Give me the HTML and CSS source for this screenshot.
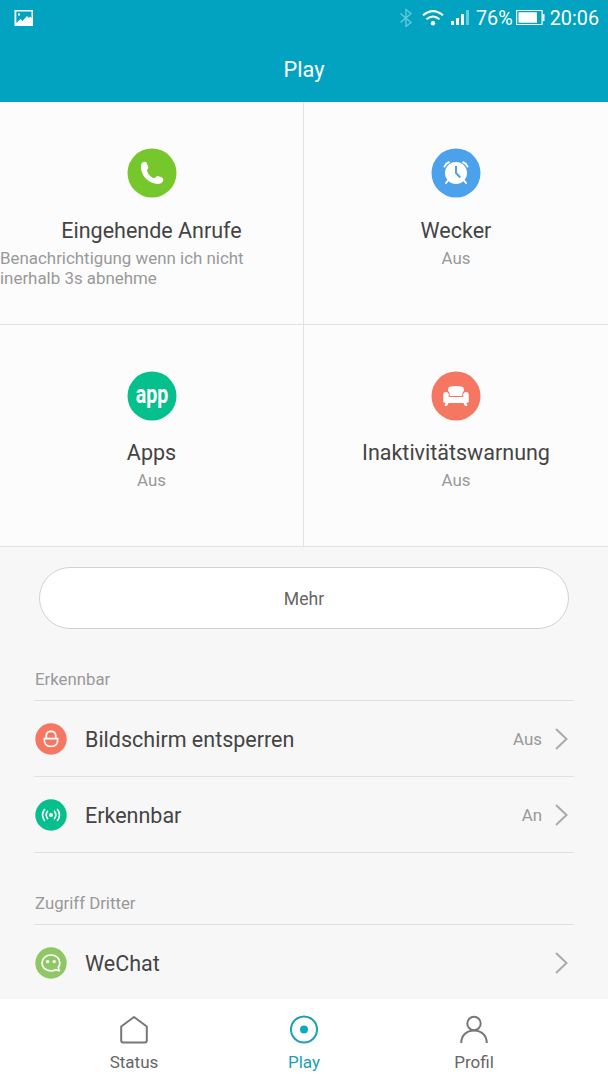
FILE: index.html
```html
<!DOCTYPE html>
<html lang="de">
<head>
<meta charset="utf-8">
<title>Play</title>
<link rel="stylesheet" href="styles.css">
</head>
<body>
<div class="screen">
  <header class="header">
    <div class="statusbar">
      <svg class="picture" width="20" height="18" viewBox="0 0 20 18"><path fill="#fff" fill-rule="evenodd" d="M.5 1h18.500v16H.5zM2.300 2.500v11.500L6.500 10l2 2 4.500-5 2 2 1-1.500 1.500 1.500v-6.500zM4 4.500h2v2H4z"/></svg>
      <div class="indicators">
        <svg class="bluetooth" width="14" height="20" viewBox="0 0 14 20" fill="none" stroke="#66cbda" stroke-width="1.300"><path d="M1.500 5.500L12 14.500L7 18.500V1.500L12 5.500L1.500 14.500"/></svg>
        <svg class="wifi" width="22" height="18" viewBox="0 0 22 18" fill="none" stroke="#fff" stroke-width="2.100"><path d="M1 6.300Q11-2.200 21 6.300M4.500 10.300Q11 4.700 17.500 10.300"/><circle cx="11" cy="14.300" r="2.200" fill="#fff" stroke="none"/></svg>
        <svg class="signal" width="20" height="18" viewBox="0 0 20 18"><path fill="#fff" d="M0 12h3v4H0zM5 9h3v7H5zM10 5h3v11h-3z"/><path fill="#66cbda" d="M15 1h3v15h-3z"/></svg>
        <span class="percent">76%</span>
        <svg class="battery" width="30" height="18" viewBox="0 0 30 18"><path d="M.6 1.500h25.500v14H.6z" fill="none" stroke="#fff" stroke-width="1.200"/><path d="M2.500 3.300h18.500v10.400H2.500zM26.500 5h2v7h-2z" fill="#fff"/></svg>
        <span class="time">20:06</span>
      </div>
    </div>
    <h1 class="title">Play</h1>
  </header>

  <main class="content">
    <section class="tiles">
      <div class="tile">
        <svg class="tile-icon" viewBox="0 0 50 50"><circle cx="25" cy="25" r="24.500" fill="#75c72c"/><path fill="#fff" d="M14.200 16.500C15 13.500 18.500 12.800 19.700 15L21.300 19C21.500 21 19.500 21.500 20.200 23.500C21.500 26.700 23.500 28.800 26.500 30C28.500 30.500 29 28 31 28L35 29.500C37.700 31 36 34.500 33.500 35.500C29 37 23 34.500 19.300 31C15.700 27.500 13 21.500 14.200 16.500Z"/></svg>
        <h2 class="tile-name">Eingehende Anrufe</h2>
        <p class="tile-state">Benachrichtigung wenn ich nicht inerhalb 3s abnehme</p>
      </div>
      <div class="tile">
        <svg class="tile-icon" viewBox="0 0 50 50"><circle cx="25" cy="25" r="24.500" fill="#4ca2ea"/><circle cx="25" cy="25" r="11" fill="#fff"/><g fill="none" stroke="#fff" stroke-width="2" stroke-linecap="round"><path d="M13.500 18.500Q14.500 15.500 17.800 14.300M36.500 18.500Q35.500 15.500 32.200 14.300M17 32.500L15 35M33 32.500L35 35"/></g><path d="M25 18v7l4.300 4.500" fill="none" stroke="#4ca2ea" stroke-width="2"/></svg>
        <h2 class="tile-name">Wecker</h2>
        <p class="tile-state">Aus</p>
      </div>
      <div class="tile lower">
        <svg class="tile-icon" viewBox="0 0 50 50"><circle cx="25" cy="25" r="24.500" fill="#05c08c"/><text class="app-mark" x="8.700" y="32" textLength="32.500" lengthAdjust="spacingAndGlyphs">app</text></svg>
        <h2 class="tile-name">Apps</h2>
        <p class="tile-state">Aus</p>
      </div>
      <div class="tile lower">
        <svg class="tile-icon" viewBox="0 0 50 50"><circle cx="25" cy="25" r="24.500" fill="#f57762"/><path fill="#fff" d="M17 20V18.500Q17 15.500 20 15.500Q25 14.700 30 15.500Q33 15.500 33 18.500V20Q31.300 20.700 31.300 23V25H18.700V23Q18.700 20.700 17 20Z"/><path fill="#fff" d="M12.300 23.500Q12.300 21 15 21Q17.700 21 17.700 23.500V25.900H32.300V23.500Q32.300 21 35 21Q37.700 21 37.700 23.500V31.500H35.500L36.500 35H34.200L32.300 32H17.700L15.800 35H13.500L14.500 31.500H12.300Z"/></svg>
        <h2 class="tile-name">Inaktivitätswarnung</h2>
        <p class="tile-state">Aus</p>
      </div>
    </section>

    <button class="more">Mehr</button>

    <section class="group">
      <h3 class="group-name">Erkennbar</h3>
      <div class="row">
        <svg class="row-icon" viewBox="0 0 32 32"><circle cx="16" cy="16" r="15.700" fill="#f57762"/><g fill="none" stroke="#fff" stroke-width="1.700"><path d="M9.300 15.700H22.700Q23.200 23.500 16 23.500Q8.800 23.500 9.300 15.700Z"/><path d="M11.300 15.500V12.500Q11.500 8.300 16 8.300Q20.500 8.300 20.700 12.500V15.500"/></g></svg>
        <span class="row-name">Bildschirm entsperren</span>
        <span class="row-state">Aus</span>
        <svg class="chevron" viewBox="0 0 13 22"><path d="M1 1l10.500 10L1 21"/></svg>
      </div>
      <div class="row">
        <svg class="row-icon" viewBox="0 0 32 32"><circle cx="16" cy="16" r="15.700" fill="#05c08c"/><circle cx="16" cy="16" r="2" fill="#fff"/><path fill="none" stroke="#fff" stroke-width="1.600" d="M12.900 11.800Q9.500 16 12.900 20.200M9.800 10Q5.200 16 9.800 22M19.100 11.800Q22.500 16 19.100 20.200M22.200 10Q26.800 16 22.200 22"/></svg>
        <span class="row-name">Erkennbar</span>
        <span class="row-state">An</span>
        <svg class="chevron" viewBox="0 0 13 22"><path d="M1 1l10.500 10L1 21"/></svg>
      </div>
    </section>

    <section class="group">
      <h3 class="group-name">Zugriff Dritter</h3>
      <div class="row">
        <svg class="row-icon" viewBox="0 0 32 32"><circle cx="16" cy="16" r="15.700" fill="#90c766"/><path fill="none" stroke="#fff" stroke-width="1.700" stroke-linejoin="round" d="M23.300 20.500Q24.800 18.300 24.800 16C24.800 11.300 21 8 16 8S7 11.300 7 16S11 23.800 16 23.800Q18.800 23.800 20.800 22.700L24.200 23.800Z"/><circle cx="12.600" cy="14.600" r="1.700" fill="#fff"/><circle cx="19.200" cy="14.600" r="1.700" fill="#fff"/></svg>
        <span class="row-name">WeChat</span>
        <svg class="chevron" viewBox="0 0 13 22"><path d="M1 1l10.500 10L1 21"/></svg>
      </div>
    </section>
  </main>

  <nav class="tabs">
    <div class="tab">
      <svg class="tab-icon" viewBox="0 0 30 30"><path d="M15 2L27.800 11.500V25.500Q27.800 27.500 25.800 27.500H4.200Q2.200 27.500 2.200 25.500V11.500Z"/></svg>
      <span>Status</span>
    </div>
    <div class="tab active">
      <svg class="tab-icon" viewBox="0 0 30 30"><circle cx="15" cy="14.500" r="13"/><circle class="dot" cx="15" cy="14.500" r="4"/></svg>
      <span>Play</span>
    </div>
    <div class="tab">
      <svg class="tab-icon" viewBox="0 0 30 30"><circle cx="15" cy="8.500" r="6.700"/><path d="M2.200 28C2.200 20 8 15.500 15 15.500S27.800 20 27.800 28"/></svg>
      <span>Profil</span>
    </div>
  </nav>
</div>
</body>
</html>
```

FILE: styles.css
```css
* {
  box-sizing: border-box;
  margin: 0;
}

body {
  font-family: Roboto, "Liberation Sans", sans-serif;
  color: #444;
}

svg {
  display: block;
  flex: none;
}

.screen {
  width: 608px;
  height: 1080px;
  display: flex;
  flex-direction: column;
  overflow: hidden;
  background: #f7f7f7;
}

.header {
  height: 102px;
  flex: none;
  background: #02a3c0;
  color: #fff;
}

.statusbar {
  height: 36px;
  padding: 0 9px 0 14px;
  display: flex;
  align-items: center;
  justify-content: space-between;
}

.indicators {
  display: flex;
  align-items: center;
  font-size: 19.800px;
  line-height: 34px;
}

.percent,
.time {
  padding-top: 2px;
}

.wifi { margin-left: 9px; }
.signal { margin-left: 7px; }
.percent { margin-left: 5px; }
.battery { margin-left: 3px; }
.time { margin-left: 4px; }

.title {
  font-size: 21.700px;
  font-weight: 400;
  line-height: 67px;
  text-align: center;
}

.content {
  height: 897px;
  flex: none;
  overflow: hidden;
}

.tiles {
  display: grid;
  grid-template-columns: 304px 304px;
  grid-template-rows: 223px 222px;
  background: #fcfcfc;
}

.tile {
  padding-top: 46px;
  display: flex;
  flex-direction: column;
  align-items: center;
  border-bottom: 1px solid #e2e2e2;
}

.tile:nth-child(odd) {
  border-right: 1px solid #e2e2e2;
}

.tile-icon {
  width: 50px;
  height: 50px;
  overflow: visible;
}

.tile-name {
  margin-top: 19px;
  font-size: 21.500px;
  font-weight: 400;
  line-height: 27px;
}

.lower .tile-name {
  margin-top: 18px;
}

.tile-state {
  margin-top: 3.500px;
  font-size: 16.900px;
  line-height: 20px;
  color: #999;
}

.app-mark {
  font-size: 26px;
  font-weight: 700;
  fill: #fff;
}

.more {
  display: block;
  width: 530px;
  height: 62px;
  margin: 20px auto 0;
  padding: 2px 0 0;
  border: 1px solid #d2d2d2;
  border-radius: 31px;
  background: #fff;
  color: #666;
  font: 17.600px Roboto, "Liberation Sans", sans-serif;
}

.group {
  margin: 0 34px;
  padding-top: 40px;
}

.group-name {
  height: 32px;
  padding-left: 1px;
  border-bottom: 1px solid #e1e1e1;
  font-size: 16.800px;
  font-weight: 400;
  line-height: 21px;
  color: #999;
}

.row {
  height: 76px;
  padding: 1px 6px 0 1px;
  display: flex;
  align-items: center;
  border-bottom: 1px solid #e1e1e1;
}

.row-icon {
  width: 32px;
  height: 32px;
}

.row-name {
  margin-left: 18px;
  padding-top: 1px;
  flex: 1;
  font-size: 21.500px;
}

.row-state {
  margin-right: 13px;
  font-size: 16.900px;
  color: #999;
}

.chevron {
  width: 13px;
  height: 22px;
  fill: none;
  stroke: #aaa;
  stroke-width: 2;
}

.tabs {
  flex: 1;
  padding: 0 49px;
  display: grid;
  grid-template-columns: repeat(3, 1fr);
  background: #fff;
}

.tab {
  padding-top: 16px;
  display: flex;
  flex-direction: column;
  align-items: center;
  gap: 6px;
  font-size: 17px;
  line-height: 22px;
  color: #666;
}

.tab-icon {
  width: 30px;
  height: 30px;
  fill: none;
  stroke: #777;
  stroke-width: 2;
  stroke-linejoin: round;
}

.active {
  color: #1a9fb5;
}

.active .tab-icon {
  stroke: #1a9fb5;
}

.active .dot {
  fill: #0caabf;
  stroke: none;
}
```
